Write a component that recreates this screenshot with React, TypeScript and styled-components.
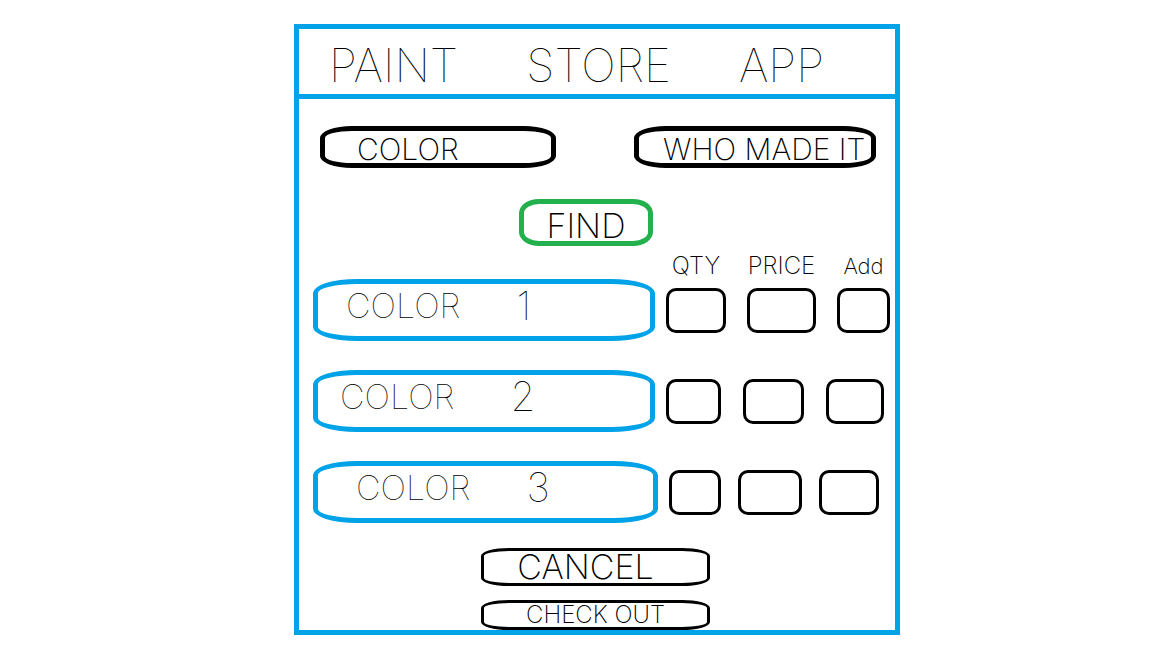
import React from "react";
import styled, { createGlobalStyle } from "styled-components";

const BLUE = "#00a2e8";
const GREEN = "#22b14c";

const GlobalStyle = createGlobalStyle`
  *, *::before, *::after { box-sizing: border-box; }
  body {
    margin: 0;
    background: #fff;
    color: #000;
    font-family: Inter, "DejaVu Sans", sans-serif;
    font-weight: 200;
  }
  button, input { font: inherit; color: inherit; }
`;

const Page = styled.div`
  display: flex;
  justify-content: center;
  padding: 24px 0 12px 42px;
`;

const Card = styled.main`
  width: 100%;
  max-width: 606px;
  border: 5px solid ${BLUE};
`;

const Header = styled.header`
  border-bottom: 5px solid ${BLUE};
  padding: 10px 30px 3px;
`;

const Title = styled.h1`
  display: flex;
  gap: 68px;
  margin: 0;
  font-size: 46px;
  line-height: 52px;
  font-weight: 100;
`;

const Search = styled.form`
  display: flex;
  flex-direction: column;
  gap: 31px;
  padding: 27px 19px 0 21px;
`;

const Filters = styled.div`
  display: flex;
  justify-content: space-between;
  gap: 24px;
`;

const Field = styled.input<{ $width: number; $indent: number }>`
  flex: 0 1 ${(p) => p.$width}px;
  min-width: 0;
  height: 42px;
  padding: 4px 0 0 ${(p) => p.$indent}px;
  border: 5px solid #000;
  border-radius: 32px / 12px;
  background: #fff;
  font-size: 30px;
  line-height: 28px;
  &::placeholder { color: #000; opacity: 1; }
`;

const FindButton = styled.button`
  align-self: center;
  width: 134px;
  height: 47px;
  margin-right: 24px;
  padding: 6px 0 0;
  border: 5px solid ${GREEN};
  border-radius: 20px / 14px;
  background: #fff;
  font-size: 34px;
  line-height: 32px;
`;

const Results = styled.table`
  display: block;
  padding: 7px 0 0 14px;
`;

const Head = styled.thead`
  display: block;
`;

const Body = styled.tbody`
  display: flex;
  flex-direction: column;
  gap: 29px;
`;

const Row = styled.tr`
  display: flex;
  align-items: center;
`;

const NameCell = styled.th<{ $width: number }>`
  flex: 0 1 ${(p) => p.$width}px;
  margin-right: 11px;
  padding: 0;
  text-align: left;
  font-weight: 100;
`;

const HeadCell = styled.th<{ $width: number; $gap?: number; $size?: number }>`
  display: flex;
  justify-content: center;
  width: ${(p) => p.$width}px;
  margin-left: ${(p) => p.$gap ?? 0}px;
  padding: 0;
  font-size: ${(p) => p.$size ?? 24}px;
  line-height: 26px;
  font-weight: 200;
`;

const Cell = styled.td<{ $width: number; $gap?: number }>`
  width: ${(p) => p.$width}px;
  margin-left: ${(p) => p.$gap ?? 0}px;
  padding: 0;
`;

const ColorName = styled.div<{ $indent: number }>`
  display: flex;
  align-items: center;
  gap: 56px;
  height: 62px;
  padding: 0 0 8px ${(p) => p.$indent}px;
  border: 5px solid ${BLUE};
  border-radius: 44px / 14px;
  font-size: 34px;
  line-height: 40px;
`;

const Digit = styled.span`
  font-size: 40px;
`;

const SmallInput = styled.input`
  display: block;
  width: 100%;
  height: 45px;
  padding: 0 4px;
  border: 3px solid #000;
  border-radius: 10px;
  background: #fff;
  font-size: 20px;
  text-align: center;
`;

const AddButton = styled.button`
  display: block;
  width: 100%;
  height: 45px;
  padding: 0;
  border: 3px solid #000;
  border-radius: 10px;
  background: #fff;
`;

const Actions = styled.div`
  display: flex;
  flex-direction: column;
  align-items: center;
  gap: 14px;
  padding: 25px 3px 0 0;
`;

const ActionButton = styled.button<{ $height: number; $size: number; $inset: number }>`
  width: 229px;
  height: ${(p) => p.$height}px;
  padding: 0 ${(p) => p.$inset}px 0 0;
  border: 3px solid #000;
  border-radius: 28px / 8px;
  background: #fff;
  font-size: ${(p) => p.$size}px;
  line-height: 24px;
`;

const colors = [
  { id: 1, nameWidth: 342, indent: 28, gap: 21, widths: [60, 69, 53] },
  { id: 2, nameWidth: 342, indent: 22, gap: 22, widths: [55, 61, 58] },
  { id: 3, nameWidth: 345, indent: 38, gap: 17, widths: [52, 64, 60] },
];

export default function App() {
  return (
    <>
      <GlobalStyle />
      <Page>
        <Card>
          <Header>
            <Title>
              <span>PAINT</span> <span>STORE</span> <span>APP</span>
            </Title>
          </Header>

          <Search onSubmit={(e) => e.preventDefault()}>
            <Filters>
              <Field $width={236} $indent={32} placeholder="COLOR" aria-label="Color" />
              <Field $width={242} $indent={24} placeholder="WHO MADE IT" aria-label="Who made it" />
            </Filters>
            <FindButton type="submit">FIND</FindButton>
          </Search>

          <Results>
            <Head>
              <Row>
                <NameCell as="td" $width={342} />
                <HeadCell scope="col" $width={60}>QTY</HeadCell>
                <HeadCell scope="col" $width={69} $gap={21}>PRICE</HeadCell>
                <HeadCell scope="col" $width={53} $gap={21} $size={22}>Add</HeadCell>
              </Row>
            </Head>
            <Body>
              {colors.map((c) => (
                <Row key={c.id}>
                  <NameCell scope="row" $width={c.nameWidth}>
                    <ColorName $indent={c.indent}>
                      <span>COLOR</span> <Digit>{c.id}</Digit>
                    </ColorName>
                  </NameCell>
                  <Cell $width={c.widths[0]}>
                    <SmallInput inputMode="numeric" aria-label={`Quantity of color ${c.id}`} />
                  </Cell>
                  <Cell $width={c.widths[1]} $gap={c.gap}>
                    <SmallInput readOnly aria-label={`Price of color ${c.id}`} />
                  </Cell>
                  <Cell $width={c.widths[2]} $gap={c.gap}>
                    <AddButton type="button" aria-label={`Add color ${c.id}`} />
                  </Cell>
                </Row>
              ))}
            </Body>
          </Results>

          <Actions>
            <ActionButton type="button" $height={38} $size={34} $inset={20}>CANCEL</ActionButton>
            <ActionButton type="button" $height={30} $size={24} $inset={0}>CHECK OUT</ActionButton>
          </Actions>
        </Card>
      </Page>
    </>
  );
}
